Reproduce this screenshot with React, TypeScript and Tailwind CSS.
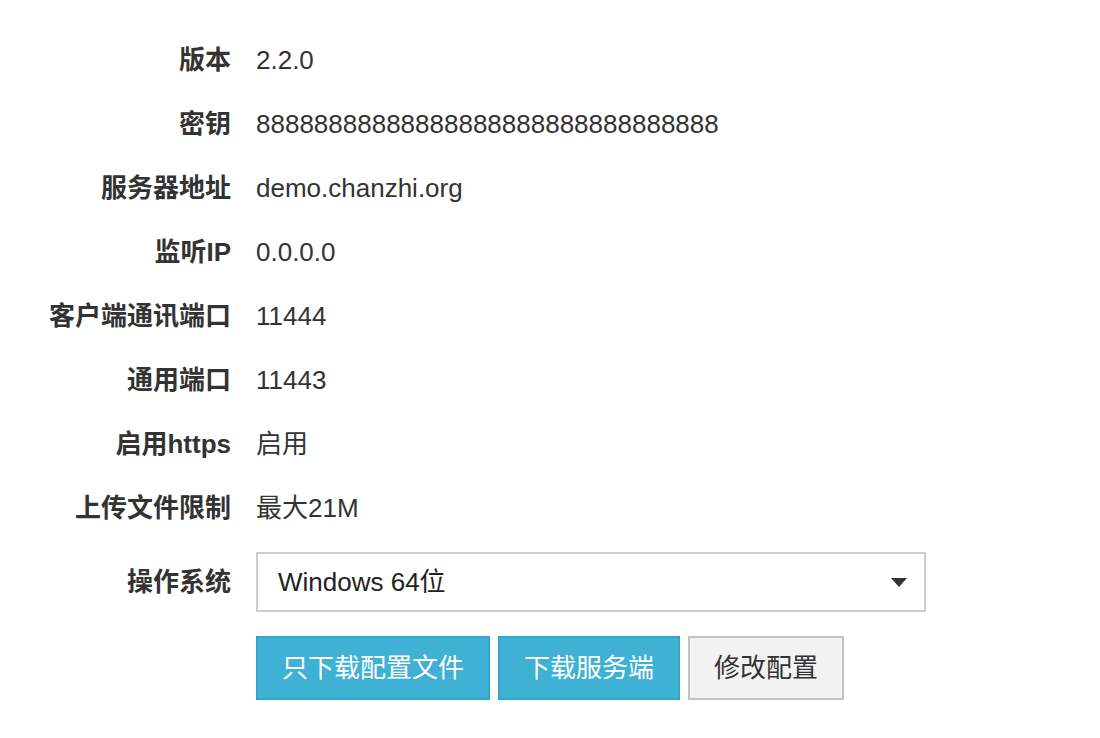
import React from "react";

const rows: [string, string][] = [
  ["版本", "2.2.0"],
  ["密钥", "88888888888888888888888888888888"],
  ["服务器地址", "demo.chanzhi.org"],
  ["监听IP", "0.0.0.0"],
  ["客户端通讯端口", "11444"],
  ["通用端口", "11443"],
  ["启用https", "启用"],
  ["上传文件限制", "最大21M"],
];

export default function App() {
  return (
    <div
      className="w-[1100px] h-[738px] bg-white text-[#333] text-[26px]"
      style={{ fontFamily: '"Liberation Sans", "Noto Sans CJK SC", sans-serif' }}
    >
      <div className="pt-[28px] grid grid-cols-[231px_1fr] gap-x-[25px]">
        {rows.map(([label, value]) => (
          <React.Fragment key={label}>
            <div className="h-16 flex items-center justify-end font-bold">{label}</div>
            <div className="h-16 flex items-center">{value}</div>
          </React.Fragment>
        ))}

        <div className="mt-3 h-[60px] flex items-center justify-end font-bold">操作系统</div>
        <div className="mt-3 w-[670px] h-[60px] border-2 border-[#cccccc] bg-white flex items-center justify-between pl-5 pr-[17px] text-[#222]">
          <span>Windows 64位</span>
          <svg width="16" height="9" viewBox="0 0 16 9">
            <path d="M0 0 H16 L8 9 Z" fill="#333" />
          </svg>
        </div>

        <div />
        <div className="mt-6 flex gap-2">
          <button className="h-16 px-6 border-2 border-[#2fa6cc] bg-[#3fb1d5] text-white">只下载配置文件</button>
          <button className="h-16 px-6 border-2 border-[#2fa6cc] bg-[#3fb1d5] text-white">下载服务端</button>
          <button className="h-16 px-6 border-2 border-[#c2c2c2] bg-[#f2f2f2] text-[#333]">修改配置</button>
        </div>
      </div>
    </div>
  );
}
